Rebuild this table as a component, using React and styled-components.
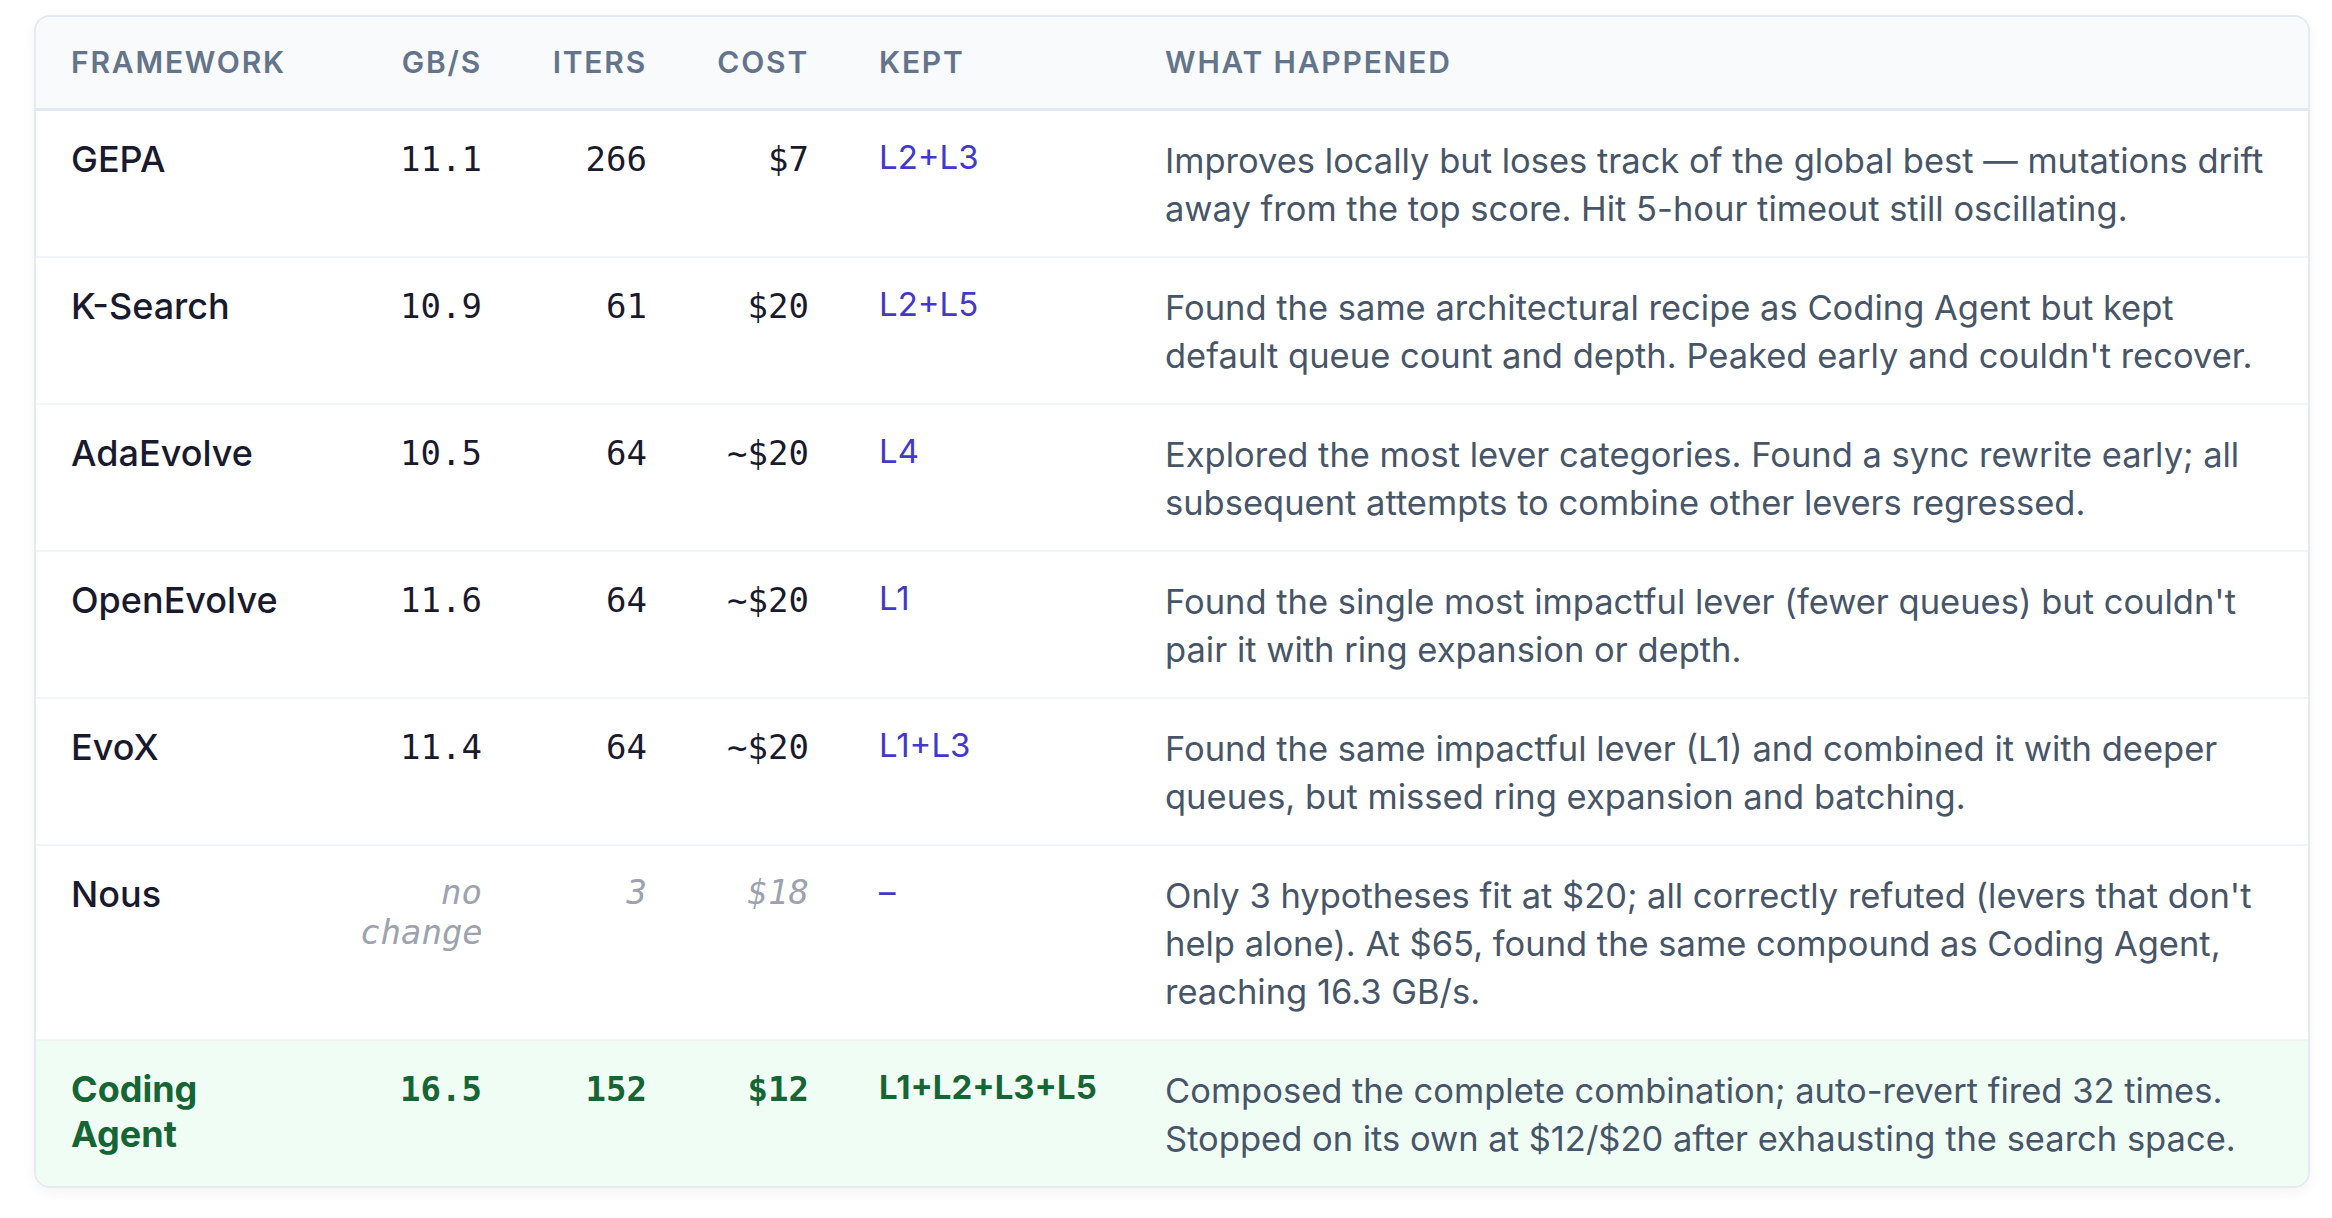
import styled, { createGlobalStyle } from 'styled-components';

const GlobalStyle = createGlobalStyle`
    body {
        margin: 0;
        background: #FFFFFF;
        font-family: Inter, "Noto Sans", sans-serif;
    }
`;

const rows = [
    { name: "GEPA", gbs: "11.1", iters: "266", cost: "$7", kept: "L2+L3", text: "Improves locally but loses track of the global best — mutations drift away from the top score. Hit 5-hour timeout still oscillating." },
    { name: "K-Search", gbs: "10.9", iters: "61", cost: "$20", kept: "L2+L5", text: "Found the same architectural recipe as Coding Agent but kept default queue count and depth. Peaked early and couldn't recover." },
    { name: "AdaEvolve", gbs: "10.5", iters: "64", cost: "~$20", kept: "L4", text: "Explored the most lever categories. Found a sync rewrite early; all subsequent attempts to combine other levers regressed." },
    { name: "OpenEvolve", gbs: "11.6", iters: "64", cost: "~$20", kept: "L1", text: "Found the single most impactful lever (fewer queues) but couldn't pair it with ring expansion or depth." },
    { name: "EvoX", gbs: "11.4", iters: "64", cost: "~$20", kept: "L1+L3", text: "Found the same impactful lever (L1) and combined it with deeper queues, but missed ring expansion and batching." },
    { name: "Nous", gbs: "no change", iters: "3", cost: "$18", kept: "–", muted: true, text: "Only 3 hypotheses fit at $20; all correctly refuted (levers that don't help alone). At $65, found the same compound as Coding Agent, reaching 16.3 GB/s." },
    { name: "Coding Agent", gbs: "16.5", iters: "152", cost: "$12", kept: "L1+L2+L3+L5", winner: true, text: "Composed the complete combination; auto-revert fired 32 times. Stopped on its own at $12/$20 after exhausting the search space." },
];

function App() {
    return (
        <Page>
            <GlobalStyle />
            <Card>
                <Table>
                    <colgroup>
                        <col style={{ width: 289 }} />
                        <col style={{ width: 192 }} />
                        <col style={{ width: 165 }} />
                        <col style={{ width: 162 }} />
                        <col style={{ width: 286 }} />
                        <col />
                    </colgroup>
                    <thead>
                        <tr>
                            <Th>Framework</Th>
                            <Th right>GB/s</Th>
                            <Th right>Iters</Th>
                            <Th right>Cost</Th>
                            <Th>Kept</Th>
                            <Th>What happened</Th>
                        </tr>
                    </thead>
                    <tbody>
                        {rows.map(row => (
                            <Row key={row.name} winner={row.winner}>
                                <Name winner={row.winner}>{row.name}</Name>
                                <Num winner={row.winner} muted={row.muted}>{row.gbs}</Num>
                                <Num winner={row.winner} muted={row.muted}>{row.iters}</Num>
                                <Num winner={row.winner} muted={row.muted}>{row.cost}</Num>
                                <Kept winner={row.winner}>{row.kept}</Kept>
                                <Desc>{row.text}</Desc>
                            </Row>
                        ))}
                    </tbody>
                </Table>
            </Card>
        </Page>
    );
}

export default App;

const Page = styled.div`
    padding: 15px 22px 40px 34px;
`;

const Card = styled.div`
    border: 2px solid #E5EAF1;
    border-radius: 16px;
    overflow: hidden;
    box-shadow: 0 4px 14px rgba(15, 23, 42, 0.05);
`;

const Table = styled.table`
    width: 100%;
    border-collapse: collapse;
    table-layout: fixed;
`;

const Th = styled.th`
    background: #F8FAFC;
    border-bottom: 3px solid #E2E8F0;
    padding: 24px 35px 25px;
    font-family: Inter, "Noto Sans", sans-serif;
    font-size: 30px;
    line-height: 42px;
    font-weight: 600;
    letter-spacing: 0.06em;
    text-transform: uppercase;
    color: #64748B;
    text-align: ${props => props.right ? "right" : "left"};
    white-space: nowrap;
`;

const Row = styled.tr`
    background: ${props => props.winner ? "#F0FDF4" : "#FFFFFF"};
    border-bottom: ${props => props.winner ? "none" : "2px solid #F1F5F9"};

    td {
        padding: 26px 35px 23px;
        vertical-align: top;
    }
`;

const Name = styled.td`
    font-family: Inter, "Noto Sans", sans-serif;
    font-size: 36px;
    line-height: 45px;
    font-weight: ${props => props.winner ? 700 : 500};
    color: ${props => props.winner ? "#166534" : "#1A1A2E"};
`;

const Num = styled.td`
    text-align: right;
    font-family: "DejaVu Sans Mono", monospace;
    font-size: 34px;
    line-height: ${props => props.muted ? "40px" : "44px"};
    font-style: ${props => props.muted ? "italic" : "normal"};
    font-weight: ${props => props.winner ? 700 : 400};
    color: ${props => props.winner ? "#166534" : props.muted ? "#9CA3AF" : "#1A1A2E"};
`;

const Kept = styled.td`
    font-family: Inter, "Noto Sans", sans-serif;
    font-size: 33px;
    line-height: 40px;
    font-weight: ${props => props.winner ? 700 : 400};
    color: ${props => props.winner ? "#166534" : "#4338CA"};
`;

const Desc = styled.td`
    font-family: Inter, "Noto Sans", sans-serif;
    font-size: 34.5px;
    line-height: 48px;
    color: #475569;

    && {
        padding-right: 22px;
    }
`;
